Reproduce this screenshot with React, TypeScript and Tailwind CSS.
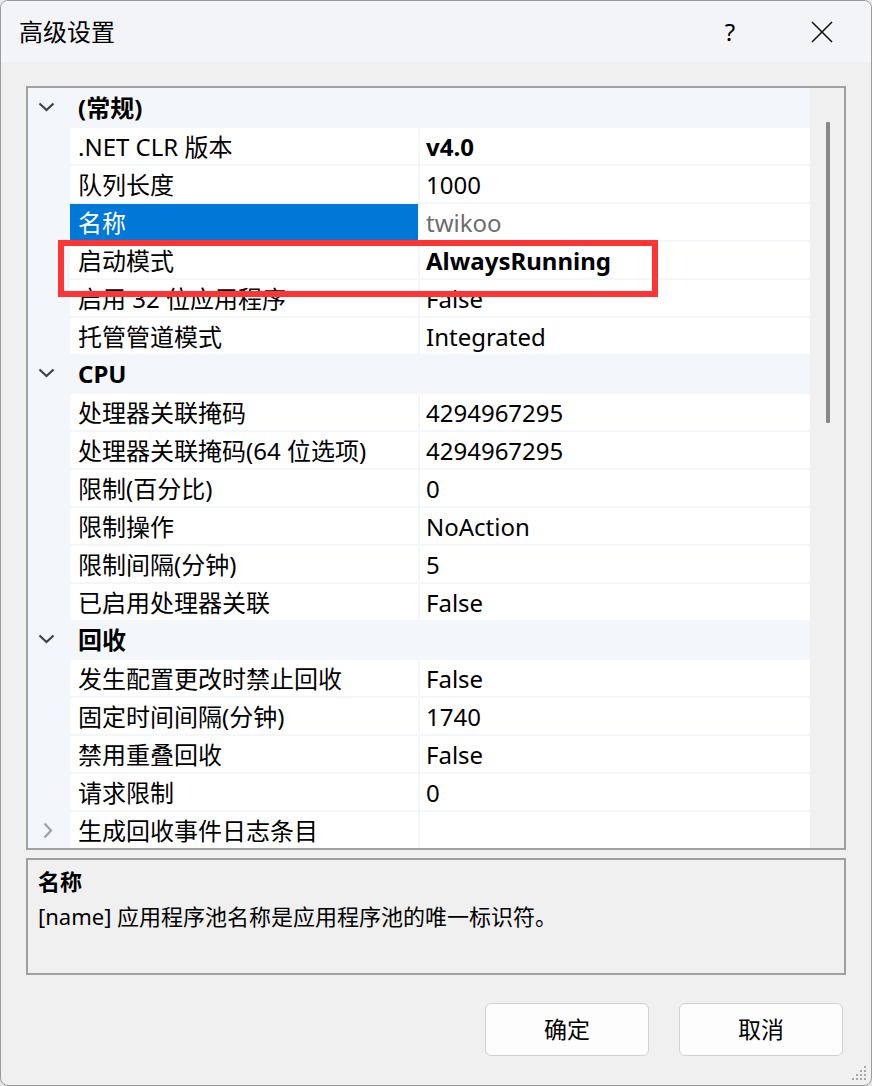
import React from "react";

type Row =
  | { kind: "cat"; label: string; open: boolean }
  | { kind: "prop"; name: string; value: string; bold?: boolean; selected?: boolean; dim?: boolean; collapsed?: boolean };

const rows: Row[] = [
  { kind: "cat", label: "(常规)", open: true },
  { kind: "prop", name: ".NET CLR 版本", value: "v4.0", bold: true },
  { kind: "prop", name: "队列长度", value: "1000" },
  { kind: "prop", name: "名称", value: "twikoo", selected: true, dim: true },
  { kind: "prop", name: "启动模式", value: "AlwaysRunning", bold: true },
  { kind: "prop", name: "启用 32 位应用程序", value: "False" },
  { kind: "prop", name: "托管管道模式", value: "Integrated" },
  { kind: "cat", label: "CPU", open: true },
  { kind: "prop", name: "处理器关联掩码", value: "4294967295" },
  { kind: "prop", name: "处理器关联掩码(64 位选项)", value: "4294967295" },
  { kind: "prop", name: "限制(百分比)", value: "0" },
  { kind: "prop", name: "限制操作", value: "NoAction" },
  { kind: "prop", name: "限制间隔(分钟)", value: "5" },
  { kind: "prop", name: "已启用处理器关联", value: "False" },
  { kind: "cat", label: "回收", open: true },
  { kind: "prop", name: "发生配置更改时禁止回收", value: "False" },
  { kind: "prop", name: "固定时间间隔(分钟)", value: "1740" },
  { kind: "prop", name: "禁用重叠回收", value: "False" },
  { kind: "prop", name: "请求限制", value: "0" },
  { kind: "prop", name: "生成回收事件日志条目", value: "", collapsed: true },
];

function ChevronDown() {
  return (
    <svg width="17" height="10" viewBox="0 0 17 10">
      <polyline points="1.5,1.5 8.5,8 15.5,1.5" fill="none" stroke="#404040" strokeWidth="2.2" />
    </svg>
  );
}

function ChevronRight() {
  return (
    <svg width="10" height="17" viewBox="0 0 10 17">
      <polyline points="1.5,1.5 8,8.5 1.5,15.5" fill="none" stroke="#a0a0a0" strokeWidth="2.2" />
    </svg>
  );
}

export default function App() {
  return (
    <div className="relative w-[872px] h-[1086px] bg-[#e6e6e6] font-['Noto_Sans','Noto_Sans_CJK_SC',sans-serif] text-black">
      <div className="w-full h-full rounded-[8px] border border-[#9a9a9a] overflow-hidden flex flex-col bg-[#f0f0f0]">
        {/* Title bar */}
        <div className="h-[61px] bg-[#f3f4f8] flex items-center shrink-0">
          <div className="pl-[18px] text-[24px] leading-none">高级设置</div>
          <div className="flex-1" />
          <div className="text-[24px] leading-none w-[20px] text-center mr-[70px]">?</div>
          <svg width="24" height="24" viewBox="0 0 24 24" className="mr-[37px]">
            <line x1="2" y1="2" x2="22" y2="22" stroke="#111" strokeWidth="1.6" />
            <line x1="22" y1="2" x2="2" y2="22" stroke="#111" strokeWidth="1.6" />
          </svg>
        </div>

        {/* Body */}
        <div className="flex-1 flex flex-col pt-[24px] px-[25px]">
          {/* Property grid */}
          <div className="h-[764px] w-[820px] border-2 border-[#a0a0a0] flex overflow-hidden">
            <div className="w-[782px] flex flex-col overflow-hidden bg-[#f3f6fb]">
              {rows.map((r, i) =>
                r.kind === "cat" ? (
                  <div key={i} className="h-[38px] shrink-0 flex items-center bg-[#f3f6fb]">
                    <div className="w-[42px] pl-[10px] flex items-center">
                      <ChevronDown />
                    </div>
                    <div className="pl-[8px] pt-[2px] text-[24px] font-bold leading-none">{r.label}</div>
                  </div>
                ) : (
                  <div key={i} className="h-[38px] shrink-0 flex pt-[2px]">
                    <div className="w-[42px] flex items-center pl-[15px]">
                      {r.collapsed ? <ChevronRight /> : null}
                    </div>
                    <div
                      className={
                        "w-[348px] h-[36px] flex items-center pl-[8px] pt-[1px] text-[24px] leading-none whitespace-nowrap " +
                        (r.selected ? "bg-[#0078d7] text-white" : "bg-white")
                      }
                    >
                      {r.name}
                    </div>
                    <div
                      className={
                        "ml-[2px] flex-1 h-[36px] bg-white flex items-center pl-[6px] pt-[1px] text-[24px] leading-none " +
                        (r.bold ? "font-bold " : "") +
                        (r.dim ? "text-[#6d6d6d]" : "")
                      }
                    >
                      {r.value}
                    </div>
                  </div>
                )
              )}
            </div>
            <div className="flex-1 bg-[#f0f0f0] pt-[34px] pl-[16px]">
              <div className="w-[4px] h-[301px] bg-[#888888] rounded-[1px]" />
            </div>
          </div>

          {/* Description */}
          <div className="mt-[8px] h-[117px] w-[820px] border-2 border-[#a0a0a0] bg-[#f0f0f0] pl-[10px] pt-[8px]">
            <div className="text-[22px] font-bold leading-[26px]">名称</div>
            <div className="text-[22px] leading-[26px] mt-[9px]">[name] 应用程序池名称是应用程序池的唯一标识符。</div>
          </div>

          {/* Buttons */}
          <div className="mt-[28px] flex justify-end gap-[30px] pr-[3px]">
            <button className="w-[164px] h-[53px] rounded-[6px] border border-[#d0d0d0] bg-[#fdfdfd] text-[23px] leading-none">
              确定
            </button>
            <button className="w-[164px] h-[53px] rounded-[6px] border border-[#d0d0d0] bg-[#fdfdfd] text-[23px] leading-none">
              取消
            </button>
          </div>
        </div>
      </div>

      {/* Red annotation box */}
      <div className="absolute left-[58px] top-[240px] w-[600px] h-[57px] border-[6px] border-[#ff3535]" />

      {/* Resize grip */}
      <svg className="absolute left-[850px] top-[1064px]" width="18" height="18" viewBox="0 0 18 18">
        {[
          [14, 2],
          [10, 6],
          [14, 6],
          [6, 10],
          [10, 10],
          [14, 10],
          [2, 14],
          [6, 14],
          [10, 14],
          [14, 14],
        ].map(([x, y], k) => (
          <rect key={k} x={x} y={y} width="2" height="2" fill="#a8a8a8" />
        ))}
      </svg>
    </div>
  );
}
